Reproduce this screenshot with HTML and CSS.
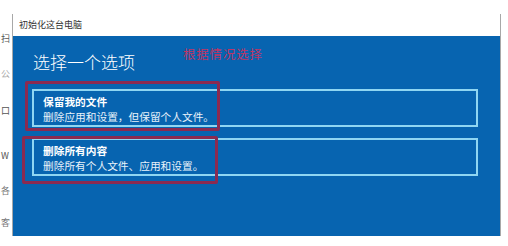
FILE: index.html
```html
<!DOCTYPE html>
<html lang="zh-CN">
<head>
<meta charset="utf-8">
<title>初始化这台电脑</title>
<link rel="stylesheet" href="styles.css">
</head>
<body>
<div class="page">
  <div class="behind">
    <span class="frag f1">扫</span>
    <span class="frag f2">公</span>
    <span class="frag f3">口</span>
    <span class="frag f4">W</span>
    <span class="frag f5">各</span>
    <span class="frag f6">客</span>
  </div>
  <div class="window">
    <div class="titlebar">初始化这台电脑</div>
    <div class="content">
      <h1 class="heading">选择一个选项</h1>
      <div class="option">
        <div class="opt-title">保留我的文件</div>
        <div class="opt-desc">删除应用和设置，但保留个人文件。</div>
      </div>
      <div class="option option-second">
        <div class="opt-title">删除所有内容</div>
        <div class="opt-desc">删除所有个人文件、应用和设置。</div>
      </div>
    </div>
  </div>
  <div class="behind-right"></div>

  <div class="note">根据情况选择</div>
  <div class="mark mark-1"></div>
  <div class="mark mark-2"></div>
</div>
</body>
</html>
```

FILE: styles.css
```css
html, body {
  margin: 0;
  padding: 0;
  background: #ffffff;
}

.page {
  position: relative;
  width: 508px;
  height: 246px;
  display: flex;
  overflow: hidden;
  font-family: "Noto Sans CJK SC", "Noto Sans", sans-serif;
}

.behind {
  width: 12px;
  flex: none;
  display: flex;
  flex-direction: column;
  overflow: hidden;
}

.frag {
  display: block;
  height: 11px;
  line-height: 11px;
  font-size: 9px;
  color: #555;
  margin-left: 1px;
  white-space: nowrap;
}
.f1 { margin-top: 33px; }
.f2 { margin-top: 24px; color: #aaa; }
.f3 { margin-top: 26px; }
.f4 { margin-top: 34px; }
.f5 { margin-top: 24px; color: #777; }
.f6 { margin-top: 21px; color: #777; }

.window {
  width: 487px;
  flex: none;
  margin-top: 14px;
  height: 222px;
  border-left: 1px solid #a8a8a8;
  border-right: 1px solid #a8a8a8;
  display: flex;
  flex-direction: column;
}

.titlebar {
  height: 22px;
  line-height: 22px;
  padding-left: 6px;
  font-size: 9px;
  color: #333;
  background: #ffffff;
}

.content {
  height: 200px;
  background: #0764b0;
  padding: 14px 22px 0 19px;
  box-sizing: border-box;
}

.heading {
  margin: 0 0 15px 1px;
  font-size: 17px;
  line-height: 24px;
  font-weight: 300;
  color: #ffffff;
}

.option {
  border: 2px solid #8fd6f2;
  padding: 3px 9px 1px 9px;
  color: #ffffff;
  font-size: 10.7px;
  line-height: 15px;
}

.option-second {
  margin-top: 11px;
}

.opt-title {
  font-weight: 700;
}

.opt-desc {
  color: #e8f2fa;
}

.behind-right {
  flex: 1;
}

.note {
  position: absolute;
  left: 183px;
  top: 45px;
  font-size: 12.5px;
  line-height: 18px;
  letter-spacing: 0.8px;
  color: #bf3565;
  font-family: "Noto Sans CJK SC", serif;
}

.mark {
  position: absolute;
  border: 3px solid #8b2a50;
  border-radius: 2px;
  box-sizing: border-box;
}

.mark-1 {
  left: 25px;
  top: 81px;
  width: 195px;
  height: 50px;
}

.mark-2 {
  left: 22px;
  top: 136px;
  width: 196px;
  height: 48px;
}
```
